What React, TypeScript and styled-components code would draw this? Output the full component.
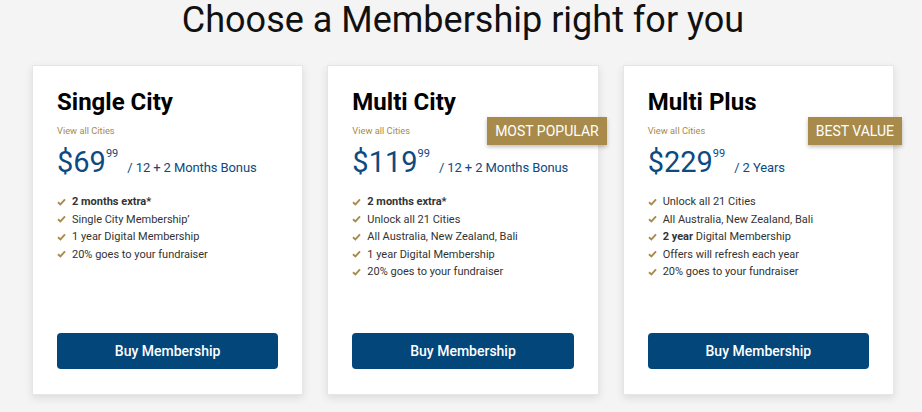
import React from 'react';
import styled, { createGlobalStyle } from 'styled-components';

const GlobalStyle = createGlobalStyle`
  html, body {
    margin: 0;
    padding: 0;
    background: #f4f4f4;
    font-family: Roboto, "Liberation Sans", Arial, sans-serif;
  }
  * {
    box-sizing: border-box;
  }
`;

const Page = styled.div`
  padding: 0 28px 0 32px;
  height: 412px;
  overflow: hidden;
`;

const Heading = styled.h1`
  margin: -1px 0 0;
  text-align: center;
  font-size: 36px;
  font-weight: 400;
  line-height: 43px;
  color: #111;
`;

const CardRow = styled.div`
  display: grid;
  grid-template-columns: repeat(3, 1fr);
  gap: 24px;
  margin-top: 23px;
`;

const Card = styled.div`
  position: relative;
  display: flex;
  flex-direction: column;
  height: 330px;
  padding: 22px 24px 25px;
  background: #fff;
  border: 1px solid #e6e6e6;
  box-shadow: 0 3px 8px rgba(0, 0, 0, 0.1);
`;

const PlanName = styled.h2`
  margin: 0;
  font-size: 24px;
  font-weight: 700;
  line-height: 29px;
  color: #000;
`;

const CitiesLink = styled.a`
  display: block;
  margin-top: 8px;
  font-size: 9.3px;
  line-height: 12px;
  color: #a88b4a;
  text-decoration: none;
`;

const PriceRow = styled.div`
  display: flex;
  align-items: flex-start;
  margin-top: 8px;
  color: #0d4a80;
`;

const Dollars = styled.span`
  font-size: 29px;
  line-height: 34px;
`;

const Cents = styled.span`
  font-size: 11px;
  line-height: 14px;
  margin-top: 2px;
`;

const Term = styled.span`
  align-self: flex-end;
  font-size: 13px;
  line-height: 18px;
  margin-left: 9px;
  margin-bottom: 2px;
  letter-spacing: -0.1px;
`;

const Features = styled.ul`
  list-style: none;
  margin: 14px 0 0;
  padding: 0;
`;

const Feature = styled.li<{ $bold?: boolean }>`
  display: flex;
  align-items: center;
  gap: 6px;
  font-size: 11px;
  line-height: 17.5px;
  color: #333;
  font-weight: ${({ $bold }) => ($bold ? 700 : 400)};

  & svg {
    flex-shrink: 0;
  }
`;

const BuyButton = styled.button`
  margin-top: auto;
  width: 100%;
  height: 36px;
  border: none;
  border-radius: 4px;
  background: #02467a;
  color: #fff;
  font-family: inherit;
  font-size: 14px;
  font-weight: 500;
  cursor: pointer;
`;

const Badge = styled.div`
  position: absolute;
  top: 51px;
  right: -9px;
  height: 28px;
  padding: 0 8px;
  display: flex;
  align-items: center;
  background: #a88b4a;
  color: #fff;
  font-size: 14px;
  text-transform: uppercase;
  box-shadow: 0 2px 4px rgba(0, 0, 0, 0.25);
`;

const Check = () => (
  <svg width="9" height="8" viewBox="0 0 9 8">
    <path d="M1 4.2 L3.4 6.4 L8 1.4" fill="none" stroke="#a88b4a" strokeWidth="1.9" />
  </svg>
);

type Plan = {
  name: string;
  dollars: string;
  term: string;
  badge?: string;
  features: { text: React.ReactNode; bold?: boolean }[];
};

const plans: Plan[] = [
  {
    name: 'Single City',
    dollars: '$69',
    term: '/ 12 + 2 Months Bonus',
    features: [
      { text: '2 months extra*', bold: true },
      { text: 'Single City Membership’' },
      { text: '1 year Digital Membership' },
      { text: '20% goes to your fundraiser' },
    ],
  },
  {
    name: 'Multi City',
    dollars: '$119',
    term: '/ 12 + 2 Months Bonus',
    badge: 'Most Popular',
    features: [
      { text: '2 months extra*', bold: true },
      { text: 'Unlock all 21 Cities' },
      { text: 'All Australia, New Zealand, Bali' },
      { text: '1 year Digital Membership' },
      { text: '20% goes to your fundraiser' },
    ],
  },
  {
    name: 'Multi Plus',
    dollars: '$229',
    term: '/ 2 Years',
    badge: 'Best Value',
    features: [
      { text: 'Unlock all 21 Cities' },
      { text: 'All Australia, New Zealand, Bali' },
      {
        text: (
          <span>
            <b>2 year</b> Digital Membership
          </span>
        ),
      },
      { text: 'Offers will refresh each year' },
      { text: '20% goes to your fundraiser' },
    ],
  },
];

export default function App() {
  return (
    <>
      <GlobalStyle />
      <Page>
        <Heading>Choose a Membership right for you</Heading>
        <CardRow>
          {plans.map((plan) => (
            <Card key={plan.name}>
              {plan.badge && <Badge>{plan.badge}</Badge>}
              <PlanName>{plan.name}</PlanName>
              <CitiesLink href="#">View all Cities</CitiesLink>
              <PriceRow>
                <Dollars>{plan.dollars}</Dollars>
                <Cents>99</Cents>
                <Term>{plan.term}</Term>
              </PriceRow>
              <Features>
                {plan.features.map((f, i) => (
                  <Feature key={i} $bold={f.bold}>
                    <Check />
                    {f.text}
                  </Feature>
                ))}
              </Features>
              <BuyButton>Buy Membership</BuyButton>
            </Card>
          ))}
        </CardRow>
      </Page>
    </>
  );
}
